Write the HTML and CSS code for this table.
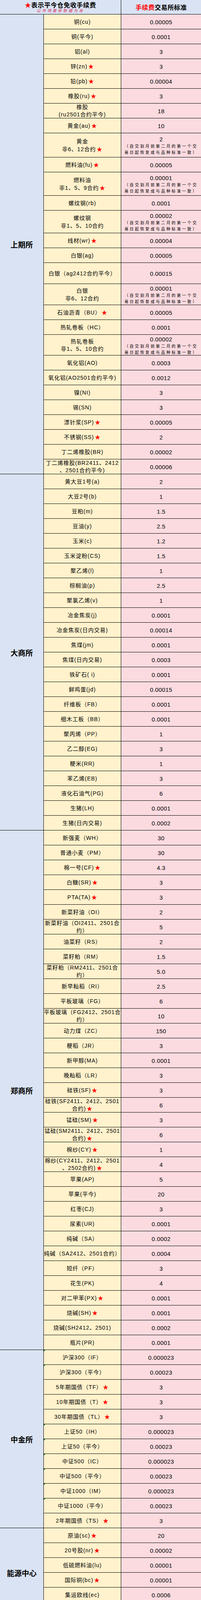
FILE: index.html
```html
<!DOCTYPE html>
<html lang="zh-CN">
<head>
<meta charset="utf-8">
<title>手续费</title>
<link rel="stylesheet" href="styles.css">
</head>
<body>
<div class="sheet">
  <div class="head">
    <div class="head-left">
      <div class="title"><span class="s">★</span>表示平今仓免收手续费</div>
      <div class="subtitle">以市场最新数据为准</div>
    </div>
    <div class="head-right"><span class="red">手续费</span>交易所标准</div>
  </div>

  <section class="ex shfe">
    <div class="ex-name">上期所</div>
    <div class="row"><div class="prod"><span>铜(cu)</span></div><div class="fee">0.00005</div></div>
    <div class="row"><div class="prod"><span>铜(平今)</span></div><div class="fee">0.0001</div></div>
    <div class="row"><div class="prod"><span>铝(al)</span></div><div class="fee">3</div></div>
    <div class="row"><div class="prod"><span>锌(zn)<i class="s">★</i></span></div><div class="fee">3</div></div>
    <div class="row"><div class="prod"><span>铅(pb)<i class="s">★</i></span></div><div class="fee">0.00004</div></div>
    <div class="row"><div class="prod"><span>橡胶(ru)<i class="s">★</i></span></div><div class="fee">3</div></div>
    <div class="row"><div class="prod tight"><span>橡胶<br>(ru2501合约平今)</span></div><div class="fee">18</div></div>
    <div class="row"><div class="prod"><span>黄金(au)<i class="s">★</i></span></div><div class="fee">10</div></div>
    <div class="row"><div class="prod"><span>黄金<br>非6、12合约<i class="s">★</i></span></div><div class="fee"><span class="num">2</span><span class="note">（自交割月前第二月的第一个交<br>易日起恢复成与品种标准一致）</span></div></div>
    <div class="row"><div class="prod"><span>燃料油(fu)<i class="s">★</i></span></div><div class="fee">0.00005</div></div>
    <div class="row"><div class="prod"><span>燃料油<br>非1、5、9合约<i class="s">★</i></span></div><div class="fee"><span class="num">0.00001</span><span class="note">（自交割月前第二月的第一个交<br>易日起恢复成与品种标准一致）</span></div></div>
    <div class="row"><div class="prod"><span>螺纹钢(rb)</span></div><div class="fee">0.0001</div></div>
    <div class="row"><div class="prod"><span>螺纹钢<br>非1、5、10合约</span></div><div class="fee"><span class="num">0.00002</span><span class="note">（自交割月前第二月的第一个交<br>易日起恢复成与品种标准一致）</span></div></div>
    <div class="row"><div class="prod"><span>线材(wr)<i class="s">★</i></span></div><div class="fee">0.00004</div></div>
    <div class="row"><div class="prod"><span>白银(ag)</span></div><div class="fee">0.00005</div></div>
    <div class="row"><div class="prod"><span>白银（ag2412合约平今）</span></div><div class="fee">0.00015</div></div>
    <div class="row"><div class="prod"><span>白银<br>非6、12合约</span></div><div class="fee"><span class="num">0.00001</span><span class="note">（自交割月前第二月的第一个交<br>易日起恢复成与品种标准一致）</span></div></div>
    <div class="row"><div class="prod"><span>石油沥青（BU）<i class="s">★</i></span></div><div class="fee">0.00005</div></div>
    <div class="row"><div class="prod"><span>热轧卷板（HC）</span></div><div class="fee">0.0001</div></div>
    <div class="row"><div class="prod"><span>热轧卷板<br>非1、5、10合约</span></div><div class="fee"><span class="num">0.00002</span><span class="note">（自交割月前第二月的第一个交<br>易日起恢复成与品种标准一致）</span></div></div>
    <div class="row"><div class="prod"><span>氧化铝(AO)</span></div><div class="fee">0.0003</div></div>
    <div class="row"><div class="prod"><span>氧化铝(AO2501合约平今)</span></div><div class="fee">0.0012</div></div>
    <div class="row"><div class="prod"><span>镍(NI)</span></div><div class="fee">3</div></div>
    <div class="row"><div class="prod"><span>锡(SN)</span></div><div class="fee">3</div></div>
    <div class="row"><div class="prod"><span>漂针浆(SP)<i class="s">★</i></span></div><div class="fee">0.00005</div></div>
    <div class="row"><div class="prod"><span>不锈钢(SS)<i class="s">★</i></span></div><div class="fee">2</div></div>
    <div class="row"><div class="prod"><span>丁二烯橡胶(BR)</span></div><div class="fee">0.00002</div></div>
    <div class="row"><div class="prod tight"><span>丁二烯橡胶(BR2411、2412<br>、2501合约平今)</span></div><div class="fee">0.00006</div></div>
  </section>

  <section class="ex dce">
    <div class="ex-name">大商所</div>
    <div class="row"><div class="prod"><span>黄大豆1号(a)</span></div><div class="fee">2</div></div>
    <div class="row"><div class="prod"><span>大豆2号(b)</span></div><div class="fee">1</div></div>
    <div class="row"><div class="prod"><span>豆粕(m)</span></div><div class="fee">1.5</div></div>
    <div class="row"><div class="prod"><span>豆油(y)</span></div><div class="fee">2.5</div></div>
    <div class="row"><div class="prod"><span>玉米(c)</span></div><div class="fee">1.2</div></div>
    <div class="row"><div class="prod"><span>玉米淀粉(CS)</span></div><div class="fee">1.5</div></div>
    <div class="row"><div class="prod"><span>聚乙烯(l)</span></div><div class="fee">1</div></div>
    <div class="row"><div class="prod"><span>棕榈油(p)</span></div><div class="fee">2.5</div></div>
    <div class="row"><div class="prod"><span>聚氯乙烯(v)</span></div><div class="fee">1</div></div>
    <div class="row"><div class="prod"><span>冶金焦炭(j)</span></div><div class="fee">0.0001</div></div>
    <div class="row"><div class="prod"><span>冶金焦炭(日内交易)</span></div><div class="fee">0.00014</div></div>
    <div class="row"><div class="prod"><span>焦煤(jm)</span></div><div class="fee">0.0001</div></div>
    <div class="row"><div class="prod"><span>焦煤(日内交易)</span></div><div class="fee">0.0003</div></div>
    <div class="row"><div class="prod"><span>铁矿石( i)</span></div><div class="fee">0.0001</div></div>
    <div class="row"><div class="prod"><span>鲜鸡蛋(jd)</span></div><div class="fee">0.00015</div></div>
    <div class="row"><div class="prod"><span>纤维板（FB）</span></div><div class="fee">0.0001</div></div>
    <div class="row"><div class="prod"><span>细木工板（BB）</span></div><div class="fee">0.0001</div></div>
    <div class="row"><div class="prod"><span>聚丙烯（PP）</span></div><div class="fee">1</div></div>
    <div class="row"><div class="prod"><span>乙二醇(EG)</span></div><div class="fee">3</div></div>
    <div class="row"><div class="prod"><span>粳米(RR)</span></div><div class="fee">1</div></div>
    <div class="row"><div class="prod"><span>苯乙烯(EB)</span></div><div class="fee">3</div></div>
    <div class="row"><div class="prod"><span>液化石油气(PG)</span></div><div class="fee">6</div></div>
    <div class="row"><div class="prod"><span>生猪(LH)</span></div><div class="fee">0.0001</div></div>
    <div class="row"><div class="prod"><span>生猪(日内交易)</span></div><div class="fee">0.0002</div></div>
  </section>

  <section class="ex czce">
    <div class="ex-name">郑商所</div>
    <div class="row"><div class="prod"><span>新强麦（WH）</span></div><div class="fee">30</div></div>
    <div class="row"><div class="prod"><span>普通小麦（PM）</span></div><div class="fee">30</div></div>
    <div class="row"><div class="prod"><span>棉一号(CF)<i class="s">★</i></span></div><div class="fee">4.3</div></div>
    <div class="row"><div class="prod"><span>白糖(SR)<i class="s">★</i></span></div><div class="fee">3</div></div>
    <div class="row"><div class="prod"><span>PTA(TA)<i class="s">★</i></span></div><div class="fee">3</div></div>
    <div class="row"><div class="prod"><span>新菜籽油（OI）</span></div><div class="fee">2</div></div>
    <div class="row"><div class="prod tight"><span>新菜籽油（OI2411、2501合<br>约）</span></div><div class="fee">5</div></div>
    <div class="row"><div class="prod"><span>油菜籽（RS）</span></div><div class="fee">2</div></div>
    <div class="row"><div class="prod"><span>菜籽粕（RM）</span></div><div class="fee">1.5</div></div>
    <div class="row"><div class="prod tight"><span>菜籽粕（RM2411、2501合<br>约）</span></div><div class="fee">5.0</div></div>
    <div class="row"><div class="prod"><span>新早籼稻（RI）</span></div><div class="fee">2.5</div></div>
    <div class="row"><div class="prod"><span>平板玻璃（FG）</span></div><div class="fee">6</div></div>
    <div class="row"><div class="prod tight"><span>平板玻璃（FG2412、2501合<br>约）</span></div><div class="fee">10</div></div>
    <div class="row"><div class="prod"><span>动力煤（ZC）</span></div><div class="fee">150</div></div>
    <div class="row"><div class="prod"><span>粳稻（JR）</span></div><div class="fee">3</div></div>
    <div class="row"><div class="prod"><span>新甲醇(MA)</span></div><div class="fee">0.0001</div></div>
    <div class="row"><div class="prod"><span>晚籼稻（LR）</span></div><div class="fee">3</div></div>
    <div class="row"><div class="prod"><span>硅铁(SF)<i class="s">★</i></span></div><div class="fee">3</div></div>
    <div class="row"><div class="prod tight"><span>硅铁(SF2411、2412、2501<br>合约)<i class="s">★</i></span></div><div class="fee">6</div></div>
    <div class="row"><div class="prod"><span>锰硅(SM)<i class="s">★</i></span></div><div class="fee">3</div></div>
    <div class="row"><div class="prod tight"><span>锰硅(SM2411、2412、2501<br>合约)<i class="s">★</i></span></div><div class="fee">6</div></div>
    <div class="row"><div class="prod"><span>棉纱(CY)<i class="s">★</i></span></div><div class="fee">1</div></div>
    <div class="row"><div class="prod tight"><span>棉纱(CY2411、2412、2501<br>、2502合约)<i class="s">★</i></span></div><div class="fee">4</div></div>
    <div class="row"><div class="prod"><span>苹果(AP)</span></div><div class="fee">5</div></div>
    <div class="row"><div class="prod"><span>苹果(平今)</span></div><div class="fee">20</div></div>
    <div class="row"><div class="prod"><span>红枣(CJ)</span></div><div class="fee">3</div></div>
    <div class="row"><div class="prod"><span>尿素(UR)</span></div><div class="fee">0.0001</div></div>
    <div class="row"><div class="prod"><span>纯碱（SA）</span></div><div class="fee">0.0002</div></div>
    <div class="row"><div class="prod"><span>纯碱（SA2412、2501合约）</span></div><div class="fee">0.0004</div></div>
    <div class="row"><div class="prod"><span>短纤（PF）</span></div><div class="fee">3</div></div>
    <div class="row"><div class="prod"><span>花生(PK)</span></div><div class="fee">4</div></div>
    <div class="row"><div class="prod"><span>对二甲苯(PX)<i class="s">★</i></span></div><div class="fee">0.0001</div></div>
    <div class="row"><div class="prod"><span>烧碱(SH)<i class="s">★</i></span></div><div class="fee">0.0001</div></div>
    <div class="row"><div class="prod"><span>烧碱(SH2412、2501)</span></div><div class="fee">0.0002</div></div>
    <div class="row"><div class="prod"><span>瓶片(PR)</span></div><div class="fee">0.0001</div></div>
  </section>

  <section class="ex cffex">
    <div class="ex-name">中金所</div>
    <div class="row"><div class="prod tri"><span>沪深300（IF）</span></div><div class="fee">0.000023</div></div>
    <div class="row"><div class="prod tri"><span>沪深300（平今）</span></div><div class="fee">0.00023</div></div>
    <div class="row"><div class="prod"><span>5年期国债（TF）<i class="s">★</i></span></div><div class="fee">3</div></div>
    <div class="row"><div class="prod"><span>10年期国债（T）<i class="s">★</i></span></div><div class="fee">3</div></div>
    <div class="row"><div class="prod"><span>30年期国债（TL）<i class="s">★</i></span></div><div class="fee">3</div></div>
    <div class="row"><div class="prod tri"><span>上证50（IH）</span></div><div class="fee">0.000023</div></div>
    <div class="row"><div class="prod tri"><span>上证50（平今）</span></div><div class="fee">0.00023</div></div>
    <div class="row"><div class="prod tri"><span>中证500（IC）</span></div><div class="fee">0.000023</div></div>
    <div class="row"><div class="prod tri"><span>中证500（平今）</span></div><div class="fee">0.00023</div></div>
    <div class="row"><div class="prod tri"><span>中证1000（IM）</span></div><div class="fee">0.000023</div></div>
    <div class="row"><div class="prod tri"><span>中证1000（平今）</span></div><div class="fee">0.00023</div></div>
    <div class="row"><div class="prod"><span>2年期国债（TS）<i class="s">★</i></span></div><div class="fee">3</div></div>
  </section>

  <section class="ex ine">
    <div class="ex-name">能源中心</div>
    <div class="row"><div class="prod"><span>原油(sc)<i class="s">★</i></span></div><div class="fee">20</div></div>
    <div class="row"><div class="prod"><span>20号胶(nr)<i class="s">★</i></span></div><div class="fee">0.00002</div></div>
    <div class="row"><div class="prod"><span>低硫燃料油(lu)</span></div><div class="fee">0.00001</div></div>
    <div class="row"><div class="prod"><span>国际铜(bc)<i class="s">★</i></span></div><div class="fee">0.00001</div></div>
    <div class="row"><div class="prod"><span>集运欧线(ec)</span></div><div class="fee">0.0006</div></div>
    <div class="row"><div class="prod"><span>集运欧线(平今)</span></div><div class="fee">0.0012</div></div>
  </section>

  <section class="ex gfex">
    <div class="ex-name">广期所</div>
    <div class="row"><div class="prod"><span>工业硅(si)<i class="s">★</i></span></div><div class="fee">0.0001</div></div>
    <div class="row"><div class="prod"><span>碳酸锂(lc)<i class="s">★</i></span></div><div class="fee">0.00008</div></div>
    <div class="row"><div class="prod"><span>碳酸锂（lc2411合约）</span></div><div class="fee">0.00016</div></div>
  </section>

  <div class="tail"><div class="g1"></div><div class="g2"></div><div class="g3"></div><div class="g4"></div></div>
</div>
</body>
</html>
```

FILE: styles.css
```css
html, body {
  margin: 0;
  padding: 0;
  background: #ffffff;
}

.sheet {
  width: 514px;
  font-family: "Liberation Sans", "Noto Sans CJK SC", sans-serif;
  color: #000000;
}

.head {
  display: grid;
  grid-template-columns: 310px 204px;
  height: 37px;
  box-sizing: border-box;
  border-bottom: 1px solid #000000;
  background: #dae3f3;
}

.head-left {
  box-sizing: border-box;
  border-right: 1px solid #000000;
  display: flex;
  flex-direction: column;
  align-items: center;
  padding-top: 4px;
}

.title {
  font-family: "Noto Sans CJK SC", sans-serif;
  font-size: 16px;
  font-weight: 700;
  line-height: 16px;
  letter-spacing: 0.6px;
  white-space: nowrap;
}

.subtitle {
  font-family: "Noto Sans CJK SC", sans-serif;
  font-size: 10px;
  line-height: 14px;
  letter-spacing: 3.5px;
  color: #d8325e;
  font-style: italic;
  white-space: nowrap;
}

.head-right {
  display: flex;
  align-items: center;
  justify-content: center;
  font-family: "Noto Sans CJK SC", sans-serif;
  font-size: 16px;
  font-weight: 700;
  line-height: 20px;
  letter-spacing: 0.4px;
}

.red {
  color: #ff0000;
}

.s {
  color: #ff0000;
  font-style: normal;
  margin-left: 2px;
}

.title .s {
  margin-left: 0;
}

/* each exchange block is a 3-column grid with fixed row tracks */
.ex {
  display: grid;
  grid-template-columns: 112px 198px 204px;
}

.ex.shfe {
  grid-template-rows: repeat(8, 38px) 62px 38px 60px 38px 58px 38px 38px 54px 54px 38px 38px 53px repeat(8, 38px);
}
.ex.dce { grid-template-rows: repeat(24, 38px); }
.ex.czce { grid-template-rows: repeat(35, 38px); }
.ex.cffex { grid-template-rows: repeat(12, 38px); }
.ex.ine { grid-template-rows: repeat(6, 38px); }
.ex.gfex { grid-template-rows: repeat(3, 38px); }

.row {
  display: contents;
}

.ex-name {
  grid-column: 1;
  grid-row: 1 / -1;
  box-sizing: border-box;
  border-right: 1px solid #000000;
  border-bottom: 1px solid #000000;
  background: #dae3f3;
  display: flex;
  align-items: center;
  justify-content: center;
  font-family: "Noto Sans CJK SC", sans-serif;
  font-size: 19px;
  font-weight: 700;
  line-height: 24px;
  padding-top: 2px;
}

.prod {
  grid-column: 2;
  position: relative;
  min-width: 0;
  min-height: 0;
  box-sizing: border-box;
  border-right: 1px solid #000000;
  border-bottom: 1px solid #000000;
  background: #fff2cc;
  display: flex;
  align-items: center;
  justify-content: center;
  text-align: center;
  font-size: 14px;
  letter-spacing: 1px;
  line-height: 19.5px;
  padding-top: 2px;
  white-space: nowrap;
}

.prod.tight {
  line-height: 18.5px;
  padding-top: 0;
}

.prod.tri::before {
  content: "";
  position: absolute;
  left: 0;
  top: 0;
  width: 0;
  height: 0;
  border-top: 4px solid #1e7a1e;
  border-right: 4px solid transparent;
}

.fee {
  grid-column: 3;
  min-width: 0;
  min-height: 0;
  box-sizing: border-box;
  border-bottom: 1px solid #000000;
  background: #fbdbe0;
  display: flex;
  flex-direction: column;
  align-items: center;
  justify-content: center;
  font-size: 15px;
  line-height: 19px;
  letter-spacing: 0.4px;
  padding-top: 2px;
  white-space: nowrap;
}

.note {
  font-family: "Noto Sans CJK SC", sans-serif;
  font-size: 10px;
  line-height: 16px;
  letter-spacing: 3.4px;
  text-align: center;
}

.tail {
  display: grid;
  grid-template-columns: 112px 198px 73px 131px;
  height: 9px;
}

.tail div {
  box-sizing: border-box;
  border-right: 1px solid #d4d4d4;
  border-bottom: 1px solid #d4d4d4;
}

.tail .g4 {
  border-right: none;
}
```
